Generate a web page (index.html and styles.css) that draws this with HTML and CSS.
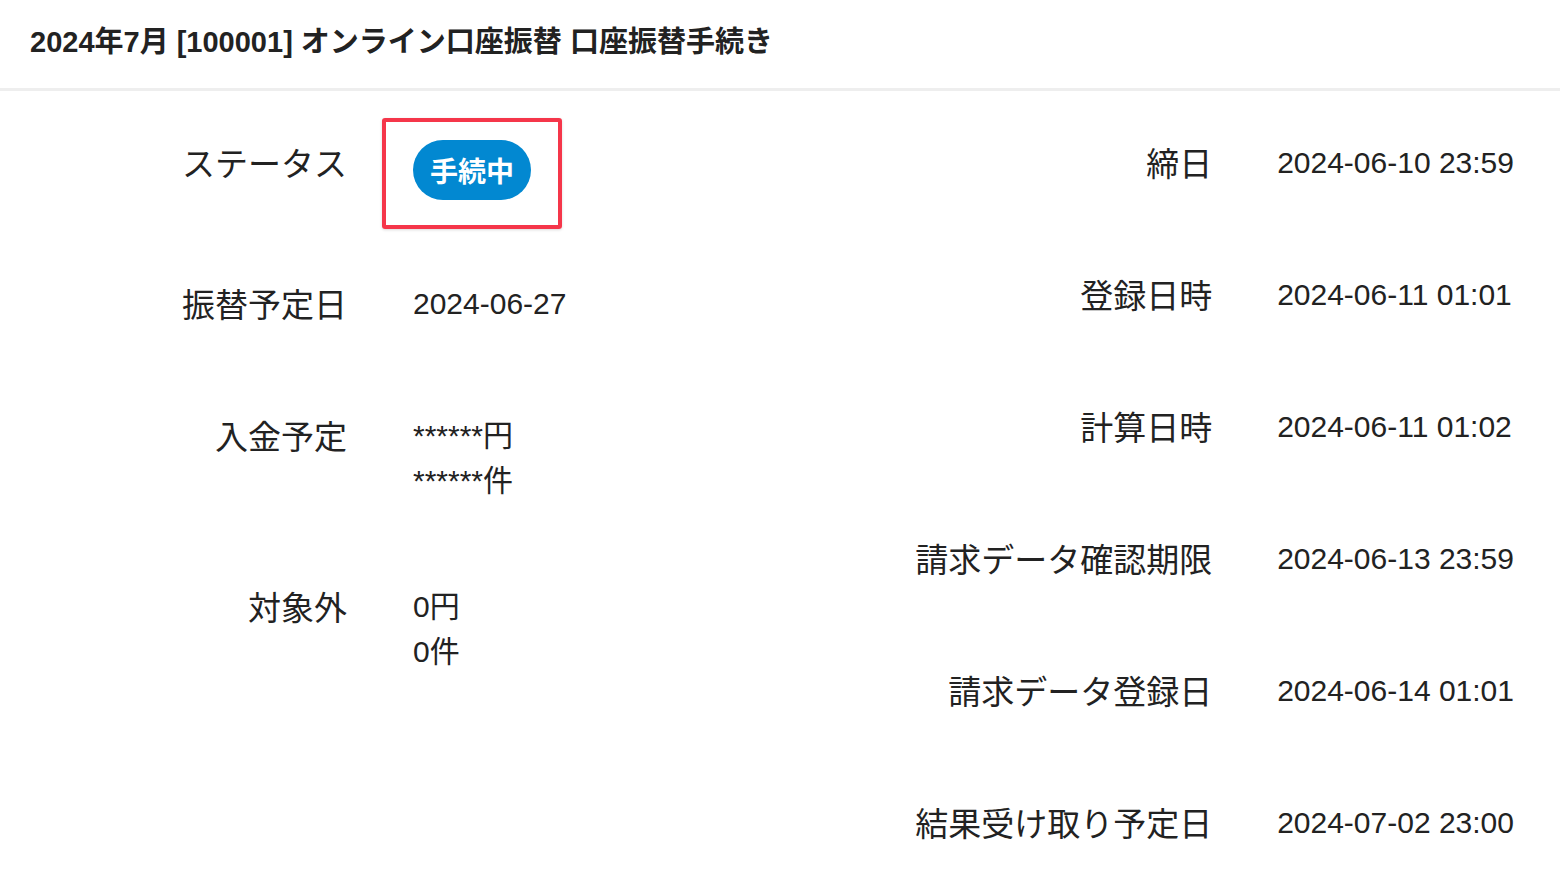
FILE: index.html
```html
<!DOCTYPE html>
<html lang="ja">
<head>
    <meta charset="UTF-8">
    <meta name="viewport" content="width=device-width, initial-scale=1.0">
    <title>口座振替手続き</title>
    <link rel="stylesheet" href="styles.css">
</head>
<body>

    <header class="page-header">
        <h1>2024年7月 [100001] オンライン口座振替 口座振替手続き</h1>
    </header>

    <main class="detail">
        <dl class="info info-left">
            <dt>ステータス</dt>
            <dd>
                <span class="badge-wrap"><span class="badge">手続中</span></span>
            </dd>

            <dt>振替予定日</dt>
            <dd>2024-06-27</dd>

            <dt>入金予定</dt>
            <dd>
                <div>******円</div>
                <div>******件</div>
            </dd>

            <dt>対象外</dt>
            <dd>
                <div>0円</div>
                <div>0件</div>
            </dd>
        </dl>

        <dl class="info info-right">
            <dt>締日</dt>
            <dd>2024-06-10 23:59</dd>

            <dt>登録日時</dt>
            <dd>2024-06-11 01:01</dd>

            <dt>計算日時</dt>
            <dd>2024-06-11 01:02</dd>

            <dt>請求データ確認期限</dt>
            <dd>2024-06-13 23:59</dd>

            <dt>請求データ登録日</dt>
            <dd>2024-06-14 01:01</dd>

            <dt>結果受け取り予定日</dt>
            <dd>2024-07-02 23:00</dd>
        </dl>
    </main>

</body>
</html>
```

FILE: styles.css
```css
body {
    font-family: "Liberation Sans", "Noto Sans CJK JP", sans-serif;
    margin: 0;
    padding: 0;
    background-color: #fff;
    color: #222;
}
.page-header {
    padding: 22px 30px 26px;
    border-bottom: 3px solid #eeeeee;
}
.page-header h1 {
    margin: 0;
    font-size: 29px;
    line-height: 40px;
    font-weight: bold;
}
.detail {
    display: flex;
    justify-content: space-between;
    align-items: flex-start;
    padding-top: 49px;
}
.info {
    display: grid;
    align-items: start;
    align-content: start;
    row-gap: 81px;
    column-gap: 66px;
    margin: 0;
}
.info-left {
    grid-template-columns: 347px auto;
}
.info-right {
    grid-template-columns: auto auto;
    column-gap: 65px;
    padding-right: 46px;
}
.info dt {
    font-family: "Noto Sans CJK JP", sans-serif;
    font-size: 33px;
    line-height: 45px;
    padding-bottom: 6px;
    text-align: right;
}
.info dd {
    margin: 0;
    font-size: 30px;
    line-height: 45px;
}
.badge-wrap {
    position: relative;
    display: inline-block;
    vertical-align: top;
}
.badge-wrap::after {
    content: "";
    position: absolute;
    top: -22px;
    left: -31px;
    right: -31px;
    bottom: -29px;
    border: 4px solid #f5364a;
    border-radius: 3px;
    box-shadow: 0 1px 3px rgba(0, 0, 0, 0.15);
}
.badge {
    display: block;
    height: 60px;
    padding: 0 17px;
    border-radius: 30px;
    background-color: #0288d1;
    color: #fff;
    font-family: "Noto Sans CJK JP", sans-serif;
    font-size: 28px;
    font-weight: bold;
    line-height: 60px;
}
```
